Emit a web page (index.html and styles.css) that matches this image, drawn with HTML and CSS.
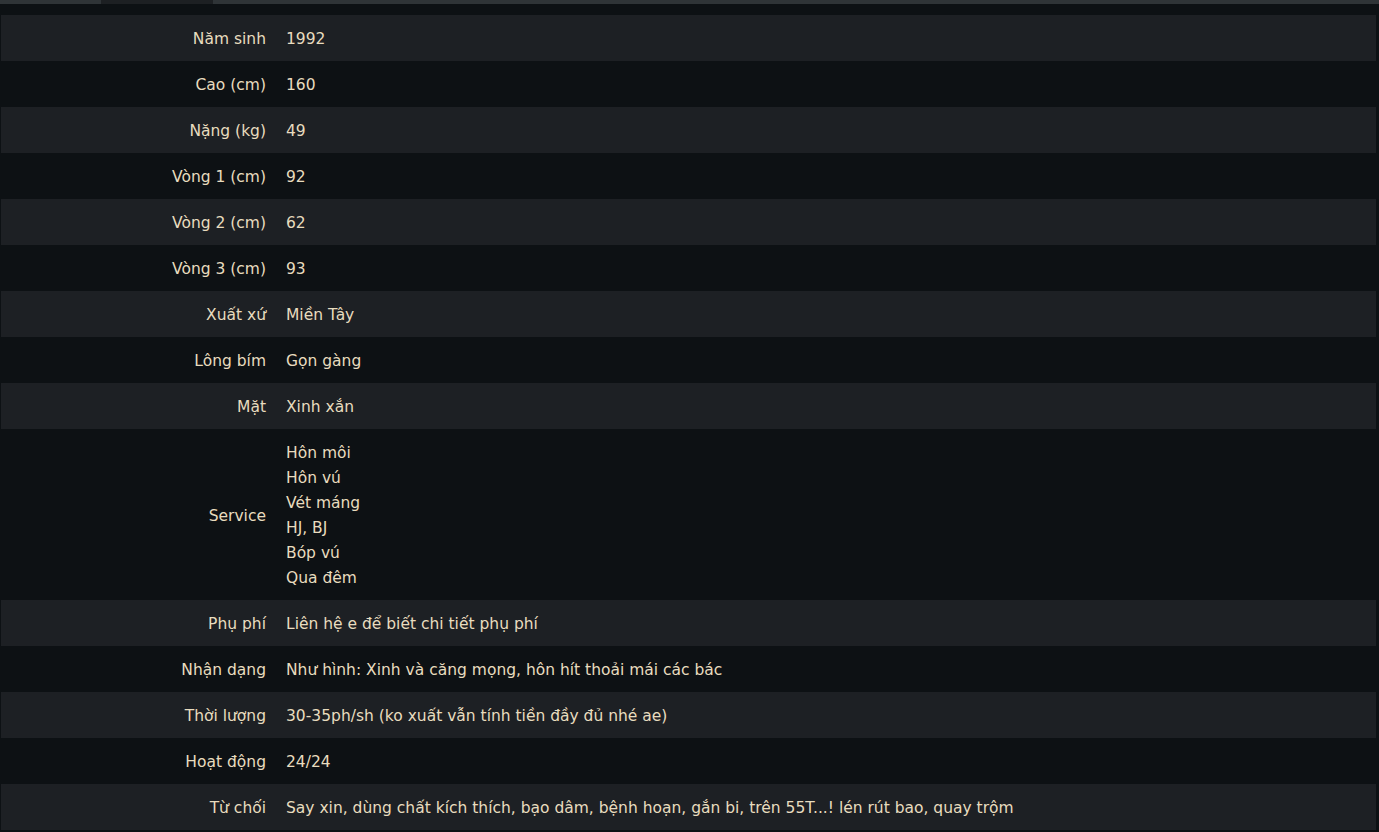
FILE: index.html
```html
<!DOCTYPE html>
<html lang="vi">
<head>
    <meta charset="UTF-8">
    <title>Thông tin</title>
    <link rel="stylesheet" href="styles.css">
</head>
<body>
    <!-- thanh tab phía trên -->
    <div class="tab-bar">
        <div class="tab-active"></div>
    </div>

    <!-- bảng thông tin -->
    <table class="info-table">
        <tr><th>Năm sinh</th><td>1992</td></tr>
        <tr><th>Cao (cm)</th><td>160</td></tr>
        <tr><th>Nặng (kg)</th><td>49</td></tr>
        <tr><th>Vòng 1 (cm)</th><td>92</td></tr>
        <tr><th>Vòng 2 (cm)</th><td>62</td></tr>
        <tr><th>Vòng 3 (cm)</th><td>93</td></tr>
        <tr><th>Xuất xứ</th><td>Miền Tây</td></tr>
        <tr><th>Lông bím</th><td>Gọn gàng</td></tr>
        <tr><th>Mặt</th><td>Xinh xắn</td></tr>
        <tr><th>Service</th><td>Hôn môi<br>Hôn vú<br>Vét máng<br>HJ, BJ<br>Bóp vú<br>Qua đêm</td></tr>
        <tr><th>Phụ phí</th><td>Liên hệ e để biết chi tiết phụ phí</td></tr>
        <tr><th>Nhận dạng</th><td>Như hình: Xinh và căng mọng, hôn hít thoải mái các bác</td></tr>
        <tr><th>Thời lượng</th><td>30-35ph/sh (ko xuất vẫn tính tiền đầy đủ nhé ae)</td></tr>
        <tr><th>Hoạt động</th><td>24/24</td></tr>
        <tr><th>Từ chối</th><td>Say xin, dùng chất kích thích, bạo dâm, bệnh hoạn, gắn bi, trên 55T...! lén rút bao, quay trộm</td></tr>
    </table>
</body>
</html>
```

FILE: styles.css
```css
* {
    margin: 0;
    padding: 0;
    box-sizing: border-box;
}

body {
    background: #0d1114;
    color: #e8dcbf;
    font-family: 'DejaVu Sans', sans-serif;
    font-size: 15.5px;
    overflow: hidden;
}

/* thanh tab */
.tab-bar {
    height: 4px;
    background: #2f3437;
    padding-left: 101px;
    margin-bottom: 11px;
}

.tab-active {
    width: 112px;
    height: 4px;
    background: #1d2023;
}

/* bảng */
.info-table {
    margin-left: 1px;
    width: 1375px;
    border-collapse: collapse;
}

.info-table tr:nth-child(odd) {
    background: #1d2024;
}

.info-table th,
.info-table td {
    padding: 12px 0 9px;
    line-height: 25px;
    vertical-align: middle;
}

.info-table th {
    width: 265px;
    text-align: right;
    font-weight: normal;
    white-space: nowrap;
}

.info-table td {
    padding-left: 20px;
    text-align: left;
}
```
